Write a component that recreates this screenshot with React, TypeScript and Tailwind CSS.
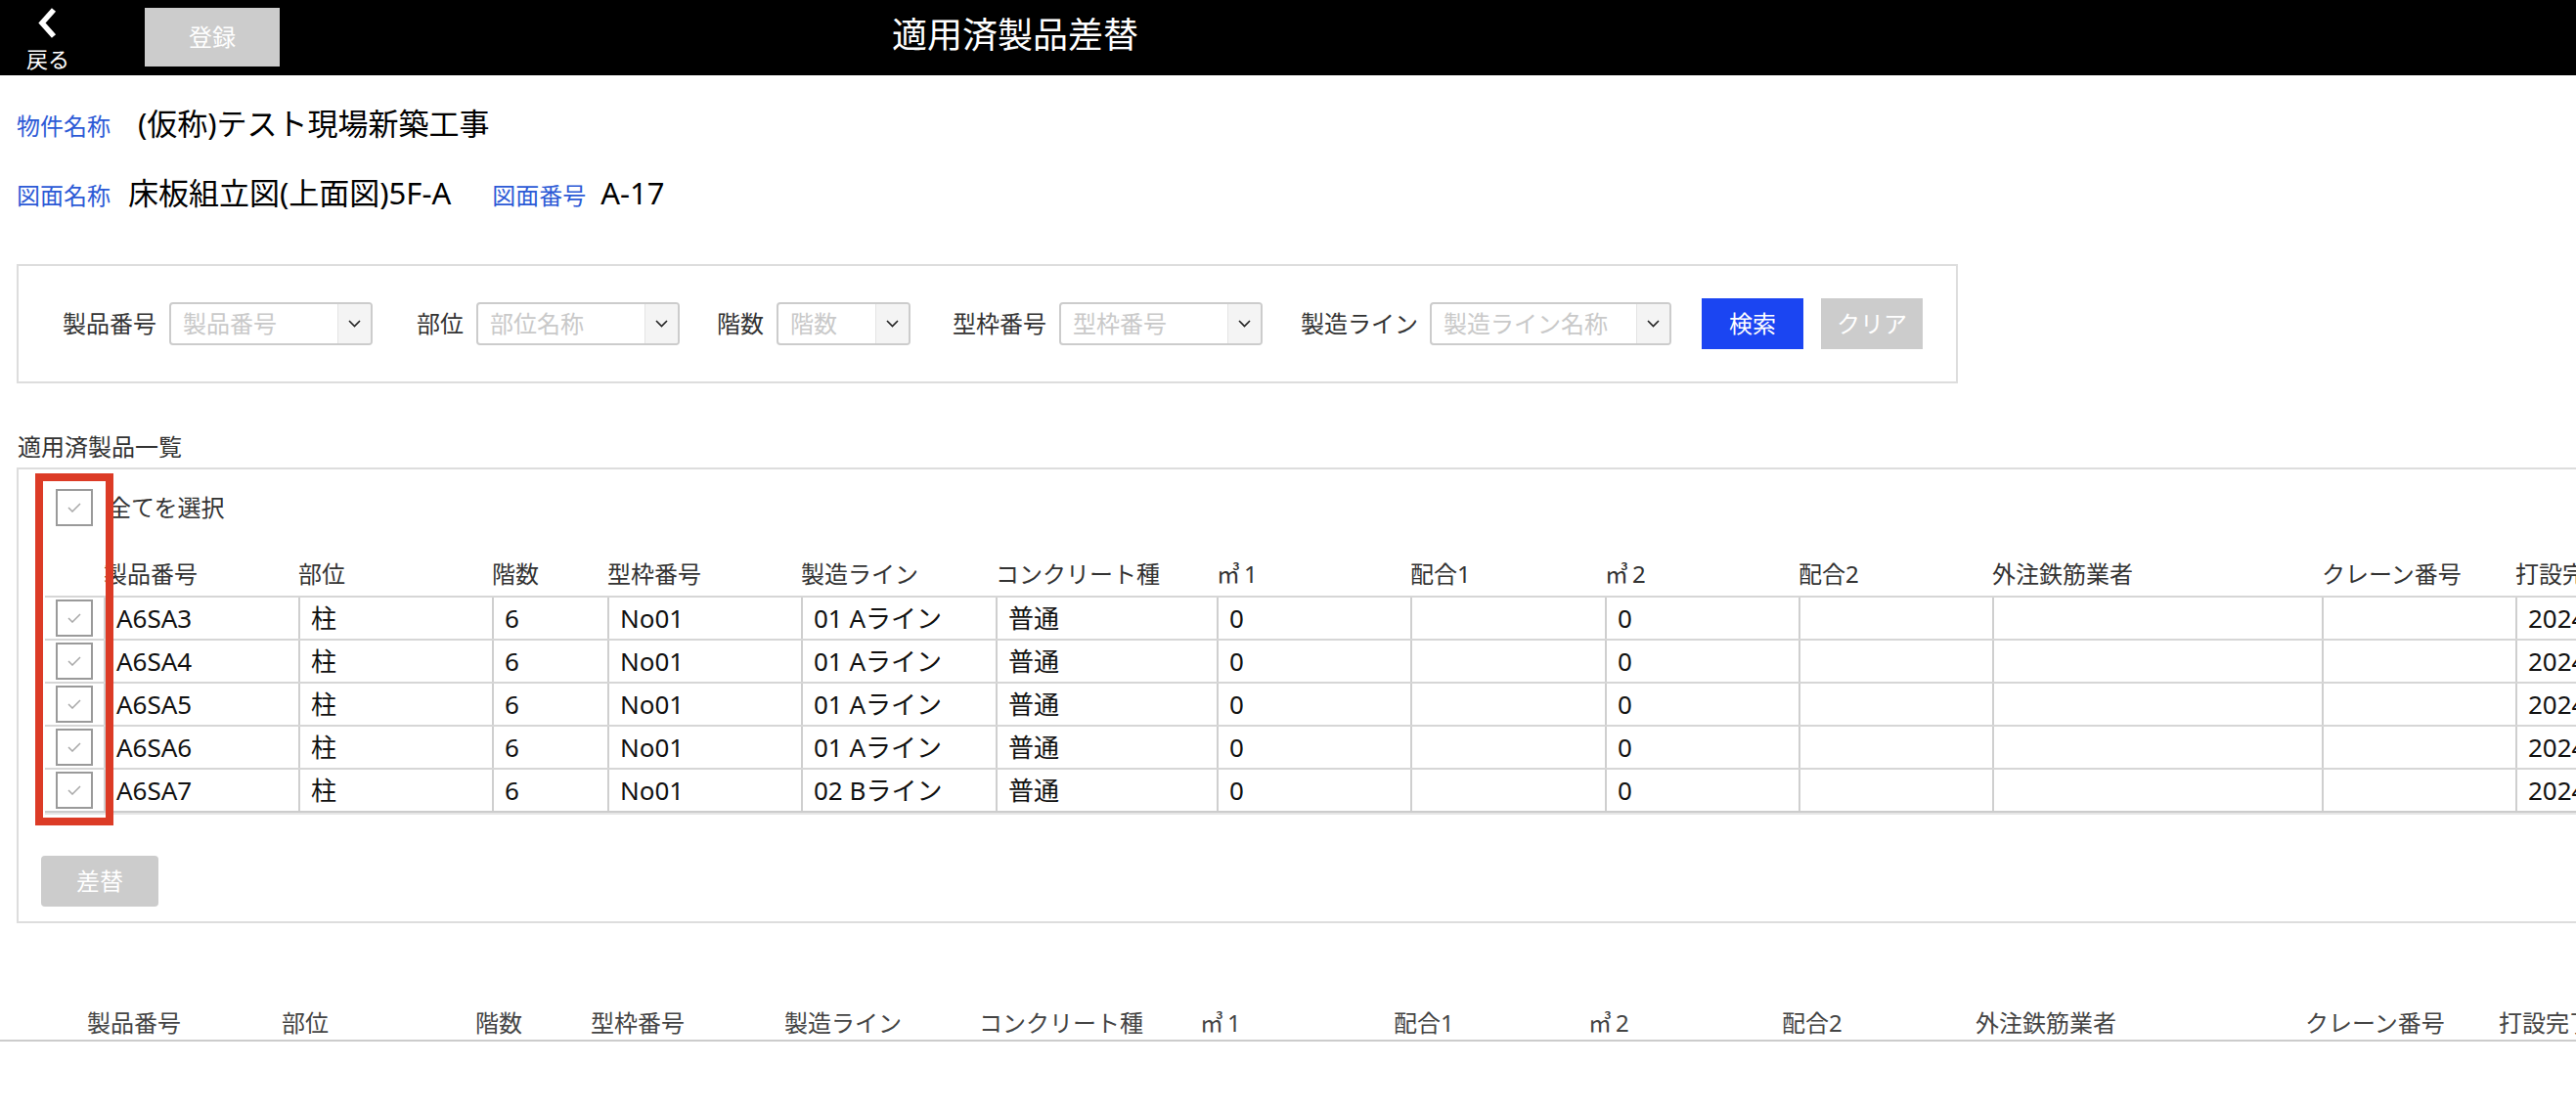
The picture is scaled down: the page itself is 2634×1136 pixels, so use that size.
import React from "react";

type Col = { h: React.ReactNode; k: string; w: string };

const M3 = ({ n }: { n: string }) => (
  <>
    <span className="inline-block w-[28px]">㎥</span>
    {n}
  </>
);

const cols: Col[] = [
  { k: "a", h: "製品番号", w: "w-[199px]" },
  { k: "b", h: "部位", w: "w-[198px]" },
  { k: "c", h: "階数", w: "w-[118px]" },
  { k: "d", h: "型枠番号", w: "w-[198px]" },
  { k: "e", h: "製造ライン", w: "w-[199px]" },
  { k: "f", h: "コンクリート種", w: "w-[226px]" },
  { k: "g", h: <M3 n="1" />, w: "w-[198px]" },
  { k: "h", h: "配合1", w: "w-[199px]" },
  { k: "i", h: <M3 n="2" />, w: "w-[198px]" },
  { k: "j", h: "配合2", w: "w-[198px]" },
  { k: "l", h: "外注鉄筋業者", w: "w-[337px]" },
  { k: "m", h: "クレーン番号", w: "w-[198px]" },
  { k: "n", h: "打設完了日", w: "w-[220px]" },
];

const rows: string[][] = [
  ["A6SA3", "柱", "6", "No01", "01 Aライン", "普通", "0", "", "0", "", "", "", "2024/04/10"],
  ["A6SA4", "柱", "6", "No01", "01 Aライン", "普通", "0", "", "0", "", "", "", "2024/04/10"],
  ["A6SA5", "柱", "6", "No01", "01 Aライン", "普通", "0", "", "0", "", "", "", "2024/04/10"],
  ["A6SA6", "柱", "6", "No01", "01 Aライン", "普通", "0", "", "0", "", "", "", "2024/04/10"],
  ["A6SA7", "柱", "6", "No01", "02 Bライン", "普通", "0", "", "0", "", "", "", "2024/04/10"],
];

function Check() {
  return (
    <div className="w-[38px] h-[38px] border-2 border-[#9a9a9a] flex items-center justify-center bg-white shrink-0">
      <svg width="14" height="10" viewBox="0 0 14 10" fill="none">
        <polyline points="1,5 5,9 13,1" stroke="#a8a8a8" strokeWidth="1.5" />
      </svg>
    </div>
  );
}

function Select({ w, ph }: { w: string; ph: string }) {
  return (
    <div className={`${w} h-[44px] border-2 border-[#cccccc] rounded-[4px] flex overflow-hidden shrink-0`}>
      <div className="flex-1 pl-[12px] flex items-center text-[24px] text-[#c9c9c9] leading-none whitespace-nowrap overflow-hidden">
        {ph}
      </div>
      <div className="w-[34px] bg-[#f4f4f4] border-l border-[#e4e4e4] flex items-center justify-center">
        <svg width="13" height="8" viewBox="0 0 13 8" fill="none">
          <polyline points="1,1 6.5,6.5 12,1" stroke="#222" strokeWidth="1.6" />
        </svg>
      </div>
    </div>
  );
}

export default function App() {
  return (
    <div className="w-full min-h-screen overflow-hidden bg-white font-['Noto_Sans','Noto_Sans_CJK_JP',sans-serif] text-[#111]">
      {/* Header */}
      <div className="h-[77px] bg-black flex items-start">
        <div className="w-[98px] flex flex-col items-center pt-[7px] shrink-0">
          <svg width="24" height="33" viewBox="0 0 24 33" fill="none">
            <polyline points="18,3 6,16.5 18,30" stroke="#fff" strokeWidth="5.5" strokeLinejoin="miter" />
          </svg>
          <div className="mt-[8px] text-white text-[22px] leading-[24px]">戻る</div>
        </div>
        <div className="ml-[50px] mt-[8px] w-[138px] h-[60px] bg-[#cccccc] flex items-center justify-center text-white text-[24px] shrink-0">
          登録
        </div>
        <div className="ml-[626px] mt-[14px] text-white text-[36px] leading-[44px] whitespace-nowrap">
          適用済製品差替
        </div>
      </div>

      {/* Info rows */}
      <div className="mt-[29px] pl-[17px] flex items-baseline leading-[40px]">
        <span className="text-[24px] text-[#2c5ad6]">物件名称</span>
        <span className="ml-[28px] text-[31px] text-black">(仮称)テスト現場新築工事</span>
      </div>
      <div className="mt-[28px] pl-[17px] flex items-baseline leading-[40px]">
        <span className="text-[24px] text-[#2c5ad6]">図面名称</span>
        <span className="ml-[18px] text-[31px] text-black">床板組立図(上面図)5F-A</span>
        <span className="ml-[42px] text-[24px] text-[#2c5ad6]">図面番号</span>
        <span className="ml-[15px] text-[31px] text-black">A-17</span>
      </div>

      {/* Search box */}
      <div className="mt-[50px] ml-[17px] w-[1985px] h-[122px] border-2 border-[#dddddd] flex items-center pl-[45px] text-[24px] text-[#333]">
        <span className="shrink-0">製品番号</span>
        <div className="ml-[13px]"><Select w="w-[208px]" ph="製品番号" /></div>
        <span className="ml-[45px] shrink-0">部位</span>
        <div className="ml-[13px]"><Select w="w-[208px]" ph="部位名称" /></div>
        <span className="ml-[38px] shrink-0">階数</span>
        <div className="ml-[13px]"><Select w="w-[137px]" ph="階数" /></div>
        <span className="ml-[43px] shrink-0">型枠番号</span>
        <div className="ml-[13px]"><Select w="w-[208px]" ph="型枠番号" /></div>
        <span className="ml-[39px] shrink-0">製造ライン</span>
        <div className="ml-[12px]"><Select w="w-[247px]" ph="製造ライン名称" /></div>
        <div className="ml-[31px] w-[104px] h-[52px] bg-[#1b45f2] text-white flex items-center justify-center shrink-0">検索</div>
        <div className="ml-[18px] w-[104px] h-[52px] bg-[#cccccc] text-white flex items-center justify-center shrink-0">クリア</div>
      </div>

      {/* Section title */}
      <div className="mt-[48px] pl-[18px] text-[24px] leading-[34px] text-[#333]">適用済製品一覧</div>

      {/* Panel */}
      <div className="relative mt-[4px] ml-[17px] w-[2800px] border-2 border-[#dddddd] pt-[19px] pb-[15px]">
        <div className="pl-[27px]">
          <div className="flex items-center h-[39px]">
            <div className="w-[60px] flex justify-center shrink-0">
              <Check />
            </div>
            <span className="ml-[4px] text-[24px] text-[#333]">全てを選択</span>
          </div>

          <div className="mt-[32px] flex h-[39px] items-start">
            <div className="w-[60px] shrink-0" />
            {cols.map((c) => (
              <div key={c.k} className={`${c.w} shrink-0 text-[24px] leading-[34px] text-[#333] whitespace-nowrap`}>
                {c.h}
              </div>
            ))}
          </div>

          <div className="border-b-2 border-[#cccccc] shadow-[0_2px_0_#e6e6e6] w-fit">
            {rows.map((r) => (
              <div key={r[0]} className="flex h-[44px] border-t-2 border-[#d6d6d6]">
                <div className="w-[60px] flex items-center justify-center shrink-0">
                  <Check />
                </div>
                {cols.map((c, i) => (
                  <div
                    key={c.k}
                    className={`${c.w} shrink-0 border-l-2 border-[#cfcfcf] px-[11px] flex items-center text-[26px] text-[#111] whitespace-nowrap overflow-hidden`}
                  >
                    {r[i]}
                  </div>
                ))}
              </div>
            ))}
          </div>
        </div>

        <div className="mt-[44px] ml-[23px] w-[120px] h-[52px] rounded-[4px] bg-[#cccccc] text-white text-[24px] flex items-center justify-center">
          差替
        </div>

        {/* Red annotation */}
        <div className="absolute left-[17px] top-[4px] w-[80px] h-[360px] border-8 border-[#dc3b26] pointer-events-none" />
      </div>

      {/* Lower table header */}
      <div className="mt-[85px] h-[36px] border-b-2 border-[#cccccc] flex items-start w-[2800px]">
        <div className="w-[89px] shrink-0" />
        {cols.map((c) => (
          <div key={c.k} className={`${c.w} shrink-0 text-[24px] leading-[34px] text-[#444] whitespace-nowrap`}>
            {c.h}
          </div>
        ))}
      </div>
    </div>
  );
}
